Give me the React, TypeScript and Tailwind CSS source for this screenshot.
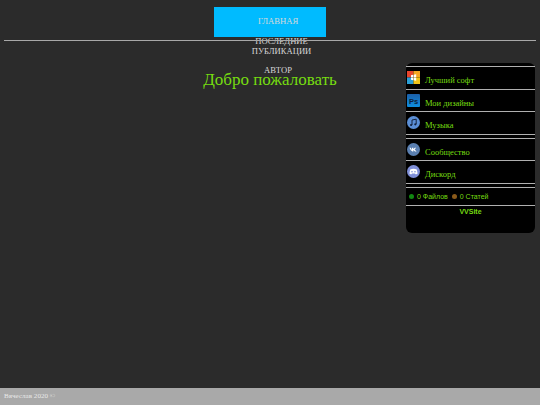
import { ReactNode } from 'react';

const LINKS: { label: string; icon: ReactNode }[] = [
  {
    label: 'Лучший софт',
    icon: (
      <svg viewBox="0 0 13 13" className="w-full h-full">
        <rect width="6.5" height="6.5" fill="#e8452c" />
        <rect x="6.5" width="6.5" height="6.5" fill="#f5a623" />
        <rect y="6.5" width="6.5" height="6.5" fill="#2a9fd6" />
        <rect x="6.5" y="6.5" width="6.5" height="6.5" fill="#f0c419" />
        <path d="M4 4.2 L6.2 3.8 V6.2 H4 Z M6.8 3.7 L9.2 3.2 V6.2 H6.8 Z M4 6.8 H6.2 V9.2 L4 8.8 Z M6.8 6.8 H9.2 V9.8 L6.8 9.3 Z" fill="#fff" />
      </svg>
    ),
  },
  {
    label: 'Мои дизайны',
    icon: (
      <svg viewBox="0 0 13 13" className="w-full h-full">
        <defs>
          <linearGradient id="ps" x1="0" y1="0" x2="0" y2="1">
            <stop offset="0" stopColor="#1c5fa8" />
            <stop offset="1" stopColor="#0d8ee0" />
          </linearGradient>
        </defs>
        <rect width="13" height="13" rx="1" fill="url(#ps)" />
        <text x="2" y="9.5" fontSize="7.5" fontWeight="bold" fontFamily="Liberation Sans, sans-serif" fill="#0a1e3c">Ps</text>
      </svg>
    ),
  },
  {
    label: 'Музыка',
    icon: (
      <svg viewBox="0 0 13 13" className="w-full h-full">
        <circle cx="6.5" cy="6.5" r="6.5" fill="#5b8fd6" />
        <path d="M5 9 V4 L9.2 3.2 V8.2" fill="none" stroke="#14233f" strokeWidth="1" />
        <circle cx="4.1" cy="9" r="1.1" fill="#14233f" />
        <circle cx="8.3" cy="8.3" r="1.1" fill="#14233f" />
      </svg>
    ),
  },
];

const SOCIAL: { label: string; icon: ReactNode }[] = [
  {
    label: 'Сообщество',
    icon: (
      <svg viewBox="0 0 13 13" className="w-full h-full">
        <circle cx="6.5" cy="6.5" r="6.5" fill="#5a7fb0" />
        <path d="M2.5 4.8 H3.8 L5 7 V4.8 H6.3 V6.2 L7.8 4.8 H9.2 L7.6 6.5 L9.6 8.5 H8 L6.3 7 V8.5 H5.4 Q3.5 8 2.5 4.8 Z" fill="#fff" />
      </svg>
    ),
  },
  {
    label: 'Дискорд',
    icon: (
      <svg viewBox="0 0 13 13" className="w-full h-full">
        <circle cx="6.5" cy="6.5" r="6.5" fill="#7f8fd8" />
        <path d="M3.2 4.6 Q6.5 3 9.8 4.6 L10.6 8.4 Q9.5 9.3 8.5 9.3 L8 8.5 H5 L4.5 9.3 Q3.5 9.3 2.4 8.4 Z" fill="#fff" />
        <circle cx="5" cy="6.8" r="0.8" fill="#7f8fd8" />
        <circle cx="8" cy="6.8" r="0.8" fill="#7f8fd8" />
      </svg>
    ),
  },
];

function SideLink({ label, icon }: { label: string; icon: ReactNode }) {
  return (
    <a className="flex h-[18.5px] mt-[3px] items-start gap-[5px] pl-[1px]">
      <span className="block w-[13px] h-[13px] mt-[1px] shrink-0">{icon}</span>
      <span className="mt-[4px] text-[8.5px] leading-[12px] text-[#76dd10]">{label}</span>
    </a>
  );
}

const Rule = () => <div className="h-[1px] bg-[#b0b0b0] shrink-0" />;

export default function App() {
  return (
    <div className="min-h-screen bg-[#2b2b2b] flex flex-col font-['Liberation_Serif',serif]">
      {/* Header */}
      <header className="h-[40px] pt-[7px]">
        <ul className="w-[112px] mx-auto text-center text-[8.6px] leading-[10px] text-[#d8d8d8]">
          <li className="h-[30px] bg-[#00bbff] flex items-center justify-center pl-[16px] pb-[3px]">ГЛАВНАЯ</li>
          <li className="h-[29px] -mt-[1px] pl-[23px]">ПОСЛЕДНИЕ<br />ПУБЛИКАЦИИ</li>
          <li className="pl-[16px]">АВТОР</li>
        </ul>
      </header>
      <div className="h-[1px] mx-[4px] bg-[#a8a8a8]" />

      <main className="flex-1 grid grid-cols-1 items-start pt-[22px]">
        <h1 className="col-start-1 row-start-1 text-center text-[17px] leading-[20px] mt-[7px] text-[#76dd10]">Добро пожаловать</h1>

        {/* Sidebar */}
        <aside className="col-start-1 row-start-1 justify-self-end w-[129px] h-[170px] mr-[5px] bg-black rounded-[6px] pt-[3px] flex flex-col">
          <Rule />
          {LINKS.map((l, i) => (
            <div key={l.label}>
              <SideLink {...l} />
              {i < LINKS.length - 1 && <Rule />}
            </div>
          ))}
          <Rule />
          <div className="h-[3px]" />
          <Rule />
          {SOCIAL.map((l, i) => (
            <div key={l.label}>
              <SideLink {...l} />
              {i < SOCIAL.length - 1 && <Rule />}
            </div>
          ))}
          <Rule />
          <div className="h-[3px]" />
          <Rule />
          <div className="flex h-[17px] items-center pl-[3px] pt-[3px] font-['Liberation_Sans',sans-serif] text-[7px] text-[#76dd10]">
            <span className="w-[5px] h-[5px] rounded-full bg-[#118811] mb-[3px] mr-[3px]" />
            <span>0 Файлов</span>
            <span className="w-[5px] h-[5px] rounded-full bg-[#8a5a1a] mb-[3px] ml-[4px] mr-[3px]" />
            <span>0 Статей</span>
          </div>
          <Rule />
          <div className="text-center pt-[1px] font-['Liberation_Sans',sans-serif] font-bold text-[7px] leading-[10px] text-[#76dd10]">VVSite</div>
        </aside>
      </main>

      <footer className="h-[17px] bg-[#a9a9a9] pl-[4px] text-[7.1px] leading-[17px] text-[#e8e8e8]">Вячеслав 2020 ©</footer>
    </div>
  );
}
